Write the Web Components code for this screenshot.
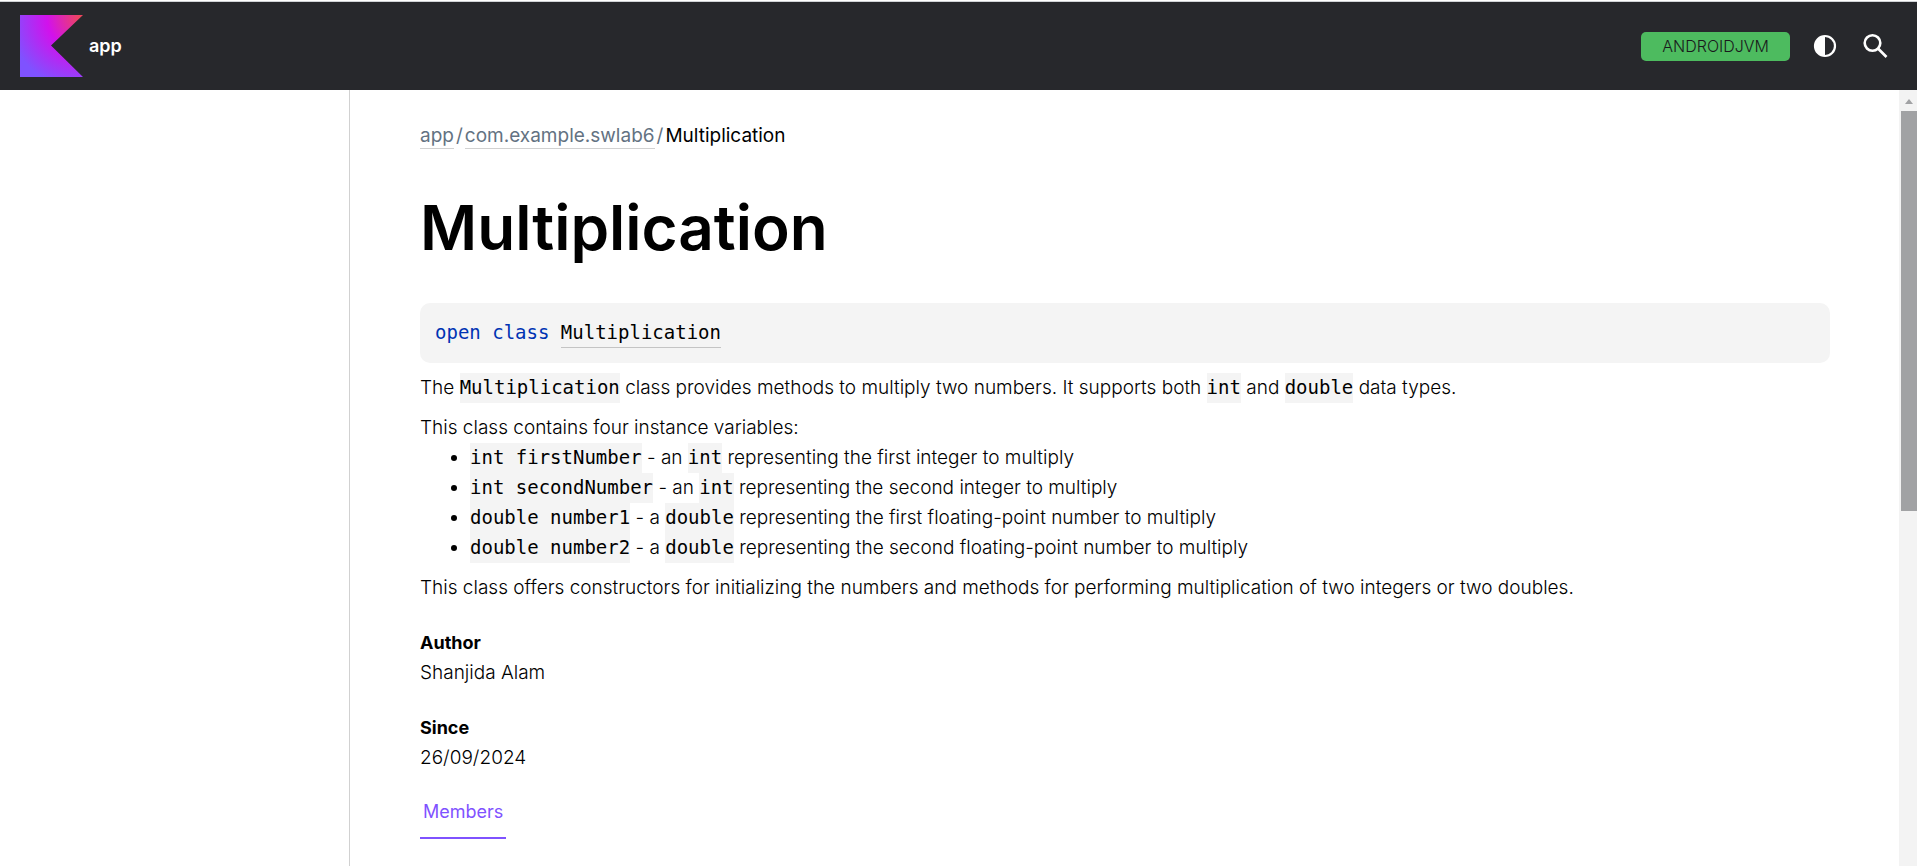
<!DOCTYPE html>
<html lang="en">
<head>
<meta charset="utf-8">
<title>Multiplication</title>
<style>
  html, body { height: 100%; margin: 0; }
  body { background: #fff; color: #000; font: 300 19px/30px Inter, "Open Sans", sans-serif; }
</style>
</head>
<body>
<doc-page>
  <doc-header slot="header" name="app" platform="ANDROIDJVM"></doc-header>
  <doc-breadcrumbs>
    <a href="#app">app</a>
    <a href="#package">com.example.swlab6</a>
    <span>Multiplication</span>
  </doc-breadcrumbs>
  <doc-title>Multiplication</doc-title>
  <doc-signature keywords="open class" name="Multiplication"></doc-signature>
  <doc-paragraph>The <doc-code>Multiplication</doc-code> class provides methods to multiply two numbers. It supports both <doc-code>int</doc-code> and <doc-code>double</doc-code> data types.</doc-paragraph>
  <doc-paragraph>This class contains four instance variables:</doc-paragraph>
  <doc-variables></doc-variables>
  <doc-paragraph>This class offers constructors for initializing the numbers and methods for performing multiplication of two integers or two doubles.</doc-paragraph>
  <doc-tag label="Author">Shanjida Alam</doc-tag>
  <doc-tag label="Since">26/09/2024</doc-tag>
  <doc-tabs label="Members"></doc-tabs>
</doc-page>
<script>
  function define(name, render) {
    customElements.define(name, class extends HTMLElement {
      constructor() {
        super();
        this.attachShadow({ mode: 'open' });
      }
      connectedCallback() {
        this.shadowRoot.innerHTML = render(this);
      }
    });
  }

  define('doc-page', () => `
    <style>
      :host { display: flex; flex-direction: column; height: 100vh; overflow: hidden; }
      .body { display: flex; flex: 1; min-height: 0; }
      nav { flex: 0 0 349px; border-right: 1px solid #d1d1d1; }
      main { flex: 1; min-width: 0; overflow: hidden; padding: 30px 69px 0 70px; }
    </style>
    <slot name="header"></slot>
    <div class="body">
      <nav aria-label="Contents"></nav>
      <main><slot></slot></main>
      <doc-scrollbar></doc-scrollbar>
    </div>`);

  define('doc-header', el => `
    <style>
      :host { display: block; border-top: 1px solid #fff; }
      header { display: flex; align-items: center; height: 89px; padding: 0 29px 0 20px; background: #27282c; border-top: 1px solid #d0d3d6; box-sizing: border-box; }
      a { display: flex; align-items: center; gap: 6px; color: #fff; text-decoration: none; font-weight: 600; font-size: 18px; }
      .badge { margin-left: auto; height: 29px; padding: 0 21px; border: 0; border-radius: 5px; background: #4dbb5f; color: #19191c; font: 300 16px/28px Inter, sans-serif; }
      .icon { display: flex; padding: 0; border: 0; background: none; color: #fff; }
      .theme { margin-left: 23px; }
      .search { margin-left: 25px; }
    </style>
    <header>
      <a href="#home">
        <svg width="63" height="62" viewBox="0 0 63 62" aria-hidden="true">
          <defs>
            <radialGradient id="k" gradientUnits="userSpaceOnUse" cx="61" cy="2" r="72">
              <stop offset="0" stop-color="#ef4857"/>
              <stop offset=".47" stop-color="#d211ec"/>
              <stop offset="1" stop-color="#7f52ff"/>
            </radialGradient>
          </defs>
          <path d="M0 0H63L31 30.500 63 62H0Z" fill="url(#k)"/>
        </svg>
        <span>${el.getAttribute('name')}</span>
      </a>
      <button class="badge">${el.getAttribute('platform')}</button>
      <button class="icon theme" aria-label="Switch theme">
        <svg width="24" height="24" viewBox="0 0 24 24" fill="none">
          <circle cx="12" cy="12" r="10" stroke="currentColor" stroke-width="2.200"/>
          <path d="M12 2a10 10 0 0 0 0 20Z" fill="currentColor"/>
        </svg>
      </button>
      <button class="icon search" aria-label="Search">
        <svg width="26" height="26" viewBox="0 0 26 26" fill="none" stroke="currentColor" stroke-width="2.600">
          <circle cx="10.500" cy="10" r="7.800"/>
          <path d="M16 15.500 24.500 24"/>
        </svg>
      </button>
    </header>`);

  define('doc-breadcrumbs', el => {
    const items = [...el.children].map(c => c.localName === 'a'
      ? `<a href="${c.getAttribute('href')}">${c.textContent}</a><i>/</i>`
      : `<b>${c.textContent}</b>`).join('');
    return `
    <style>
      :host { display: block; }
      nav { display: flex; padding-top: 4px; color: #637282; font-weight: 400; line-height: 24px; }
      a { color: inherit; text-decoration: none; border-bottom: 1px solid #d1d1d1; }
      i { font-style: normal; padding: 0 2px; }
      b { font-weight: 400; color: #000; }
    </style>
    <nav aria-label="Breadcrumb">${items}</nav>`;
  });

  define('doc-title', () => `
    <style>
      :host { display: block; margin: 43px 0 39px; }
      h1 { margin: 0; font-size: 62px; line-height: 72px; font-weight: 600; }
    </style>
    <h1><slot></slot></h1>`);

  define('doc-signature', el => `
    <style>
      :host { display: block; padding: 15px; border-radius: 10px; background: #f4f4f4; font: 400 19px/29px "DejaVu Sans Mono", monospace; }
      .line { height: 30px; }
      .kw { color: #0033b3; }
      a { display: inline-block; color: #000; text-decoration: none; border-bottom: 1px solid #c4c4c4; }
    </style>
    <div class="line"><span class="kw">${el.getAttribute('keywords')}</span> <a href="#class">${el.getAttribute('name')}</a></div>`);

  define('doc-paragraph', () => `
    <style>
      :host { display: block; margin-top: 10px; }
      p { margin: 0; }
    </style>
    <p><slot></slot></p>`);

  define('doc-code', () => `
    <style>
      :host { display: inline; }
      code { display: inline-block; height: 30px; vertical-align: top; background: #f4f4f4; font: 400 19px/29px "DejaVu Sans Mono", monospace; }
    </style>
    <code><slot></slot></code>`);

  const variables = [
    ['int firstNumber', 'an', 'int', 'the first integer'],
    ['int secondNumber', 'an', 'int', 'the second integer'],
    ['double number1', 'a', 'double', 'the first floating-point number'],
    ['double number2', 'a', 'double', 'the second floating-point number'],
  ];
  define('doc-variables', () => `
    <style>
      :host { display: block; }
      ul { margin: 0; padding: 0 0 0 50px; }
    </style>
    <ul>${variables.map(([decl, article, type, what]) =>
      `<li><doc-code>${decl}</doc-code> - ${article} <doc-code>${type}</doc-code> representing ${what} to multiply</li>`).join('')}</ul>`);

  define('doc-tag', el => `
    <style>
      :host { display: block; margin-top: 25px; }
      h4, p { margin: 0; }
      h4 { font-size: 18px; font-weight: 700; }
    </style>
    <h4>${el.getAttribute('label')}</h4>
    <p><slot></slot></p>`);

  define('doc-tabs', el => `
    <style>
      :host { display: flex; margin-top: 20px; }
      button { height: 46px; padding: 0 3px 6px; border: 0; border-bottom: 2px solid #7f52ff; background: none; color: #7f52ff; font: 400 18px/30px Inter, sans-serif; }
    </style>
    <button>${el.getAttribute('label')}</button>`);

  define('doc-scrollbar', () => `
    <style>
      :host { flex: 0 0 18px; display: flex; flex-direction: column; background: #f3f3f3; }
      svg { display: block; flex: none; }
      .thumb { flex: 9; margin-left: 2px; background: #a1a2a4; }
      .rest { flex: 8; }
    </style>
    <svg width="18" height="21" viewBox="0 0 18 21" aria-hidden="true"><path d="M6 14 10 9 14 14Z" fill="#a1a2a4"/></svg>
    <div class="thumb"></div>
    <div class="rest"></div>`);
</script>
</body>
</html>
